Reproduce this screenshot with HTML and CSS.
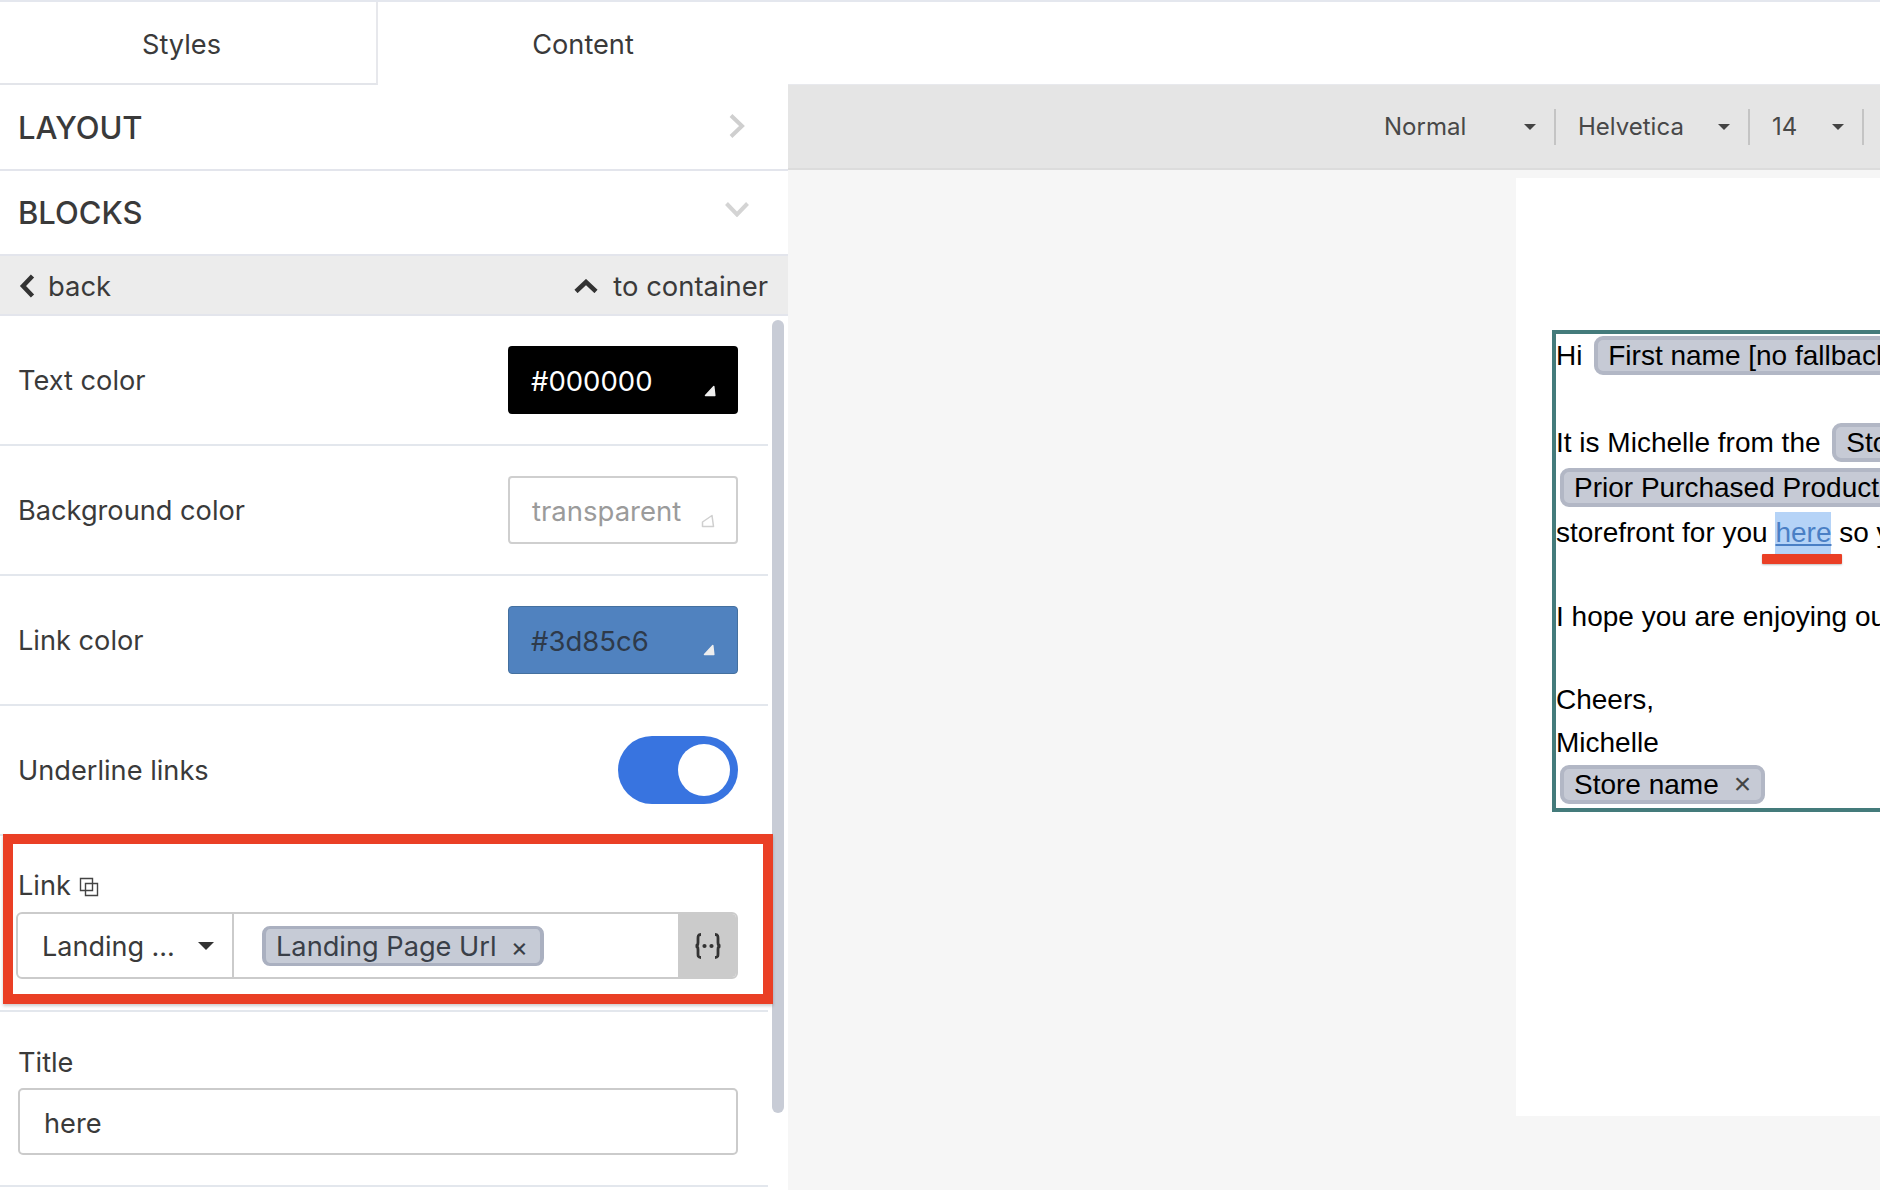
FILE: index.html
```html
<!DOCTYPE html>
<html lang="en">
<head>
<meta charset="utf-8">
<title>Email editor</title>
<link rel="stylesheet" href="styles.css">
</head>
<body>
<div class="app">
  <div class="tabs">
    <div class="tab tab-styles">Styles</div>
    <div class="tab tab-content">Content</div>
  </div>
  <div class="workspace">
    <aside class="sidebar">
      <div class="section section-first">
        <span>LAYOUT</span>
        <svg class="chev-right" width="16" height="24" viewBox="0 0 16 24"><path d="M2 1.500 13 12 2 22.500" fill="none" stroke="#cfcfcf" stroke-width="4"/></svg>
      </div>
      <div class="section">
        <span>BLOCKS</span>
        <svg class="chev-down" width="24" height="15" viewBox="0 0 24 15"><path d="M1.500 1.500 12 12.500 22.500 1.500" fill="none" stroke="#d4d4d4" stroke-width="4"/></svg>
      </div>
      <div class="navbar">
        <div class="nav-item">
          <svg width="16" height="24" viewBox="0 0 16 24"><path d="M13.500 2 4 12l9.500 10" fill="none" stroke="#333" stroke-width="4.500"/></svg>
          <span>back</span>
        </div>
        <div class="nav-item nav-up">
          <svg width="24" height="14" viewBox="0 0 24 14"><path d="M2 12.500 12 3l10 9.500" fill="none" stroke="#333" stroke-width="4.500"/></svg>
          <span>to container</span>
        </div>
      </div>

      <div class="row">
        <span>Text color</span>
        <div class="swatch swatch-black"><span class="swatch-text">#000000</span>
          <svg class="corner" width="12" height="12" viewBox="0 0 12 12"><path d="M1.500 10.500 9.800 1.500 10.800 10.500Z" fill="#eee" stroke="#eee" stroke-width="1.500" stroke-linejoin="round"/></svg>
        </div>
      </div>
      <div class="row">
        <span>Background color</span>
        <div class="swatch swatch-clear"><span class="swatch-text">transparent</span>
          <svg class="corner corner-clear" width="14" height="14" viewBox="0 0 14 14"><path d="M1.500 12.500 1.500 8 11 1.500 12.500 12.500Z" fill="#fff" stroke="#cfcfcf" stroke-width="1.500" stroke-linejoin="round"/></svg>
        </div>
      </div>
      <div class="row">
        <span>Link color</span>
        <div class="swatch swatch-blue"><span class="swatch-text">#3d85c6</span>
          <svg class="corner" width="12" height="12" viewBox="0 0 12 12"><path d="M1.500 10.500 9.800 1.500 10.800 10.500Z" fill="#eee" stroke="#eee" stroke-width="1.500" stroke-linejoin="round"/></svg>
        </div>
      </div>
      <div class="row">
        <span>Underline links</span>
        <div class="toggle"><div class="knob"></div></div>
      </div>

      <div class="field-row field-link">
        <div class="field-label">Link
          <svg class="copy-icon" width="20" height="20" viewBox="0 0 20 20"><path d="M1.500 1.500h12v12h-12z M6.500 6.500h12v12h-12z" fill="none" stroke="#444" stroke-width="1.400"/></svg>
        </div>
        <div class="link-field">
          <div class="link-select">
            <span>Landing ...</span>
            <svg width="16" height="8" viewBox="0 0 16 8"><path d="M0 0h16L8 8z" fill="#333"/></svg>
          </div>
          <div class="link-value">
            <span class="tag">Landing Page Url<span class="tag-x">×</span></span>
          </div>
          <div class="link-btn">
            <svg width="28" height="26" viewBox="0 0 28 26"><path d="M7 1.500C4 1.500 4 3 4 5.500v4C4 11.500 3.500 13 1.500 13 3.500 13 4 14.500 4 16.500v4C4 23 4 24.500 7 24.500M21 1.500C24 1.500 24 3 24 5.500v4c0 2 .5 3.500 2.500 3.500-2 0-2.500 1.500-2.500 3.500v4c0 2.500 0 4-3 4" fill="none" stroke="#333" stroke-width="2.800"/><circle cx="10.500" cy="13" r="2.100" fill="#333"/><circle cx="17.500" cy="13" r="2.100" fill="#333"/></svg>
          </div>
        </div>
      </div>

      <div class="field-row">
        <div class="field-label">Title</div>
        <div class="text-input">here</div>
      </div>

      <div class="scroll-thumb"></div>
      <div class="callout"></div>
    </aside>

    <main class="main">
      <div class="toolbar">
        <div class="tool tool-normal"><span>Normal</span><i class="caret"></i></div>
        <div class="tool tool-font"><span>Helvetica</span><i class="caret"></i></div>
        <div class="tool tool-size"><span>14</span><i class="caret"></i></div>
      </div>
      <div class="canvas">
        <div class="page">
          <div class="email">
            <div class="line">Hi <span class="chip">First name [no fallback]<span class="chip-x">×</span></span></div>
            <div class="line gap-para">It is Michelle from the <span class="chip">Store name<span class="chip-x">×</span></span> team. Based on your order of</div>
            <div class="line gap-line"><span class="chip">Prior Purchased Product<span class="chip-x">×</span></span> we made a personal</div>
            <div class="line gap-line">storefront for you <a class="sel-link" href="#">here</a> so you can reorder easily.
              <span class="mark"></span>
            </div>
            <div class="line gap-para2">I hope you are enjoying our products and the new store.</div>
            <div class="line gap-para3">Cheers,</div>
            <div class="line gap-tight">Michelle</div>
            <div class="line"><span class="chip">Store name<span class="chip-x">×</span></span></div>
          </div>
        </div>
      </div>
    </main>
  </div>
</div>
</body>
</html>
```
FILE: styles.css
```css
* { box-sizing: border-box; }
html, body { margin: 0; padding: 0; }
body {
  width: 1880px;
  height: 1190px;
  overflow: hidden;
  background: #fff;
  font-family: Inter, "Liberation Sans", sans-serif;
  color: #3a3a3a;
}
.app { width: 1880px; height: 1190px; display: flex; flex-direction: column; border-top: 2px solid #e4e7ee; }

.tabs { display: flex; height: 83px; flex: none; background: #fff; }
.tab { display: flex; align-items: center; justify-content: center; padding-top: 2px; font-size: 27.200px; }
.tab-styles { width: 378px; padding-top: 3px; padding-right: 13px; border-right: 2px solid #e7e8ec; border-bottom: 2px solid #e3e5ea; }
.tab-content { width: 410px; }

.workspace { display: flex; flex: 1; min-height: 0; }

.sidebar { position: relative; width: 788px; flex: none; overflow: hidden; background: #fff; }
.section {
  height: 85px;
  display: flex;
  align-items: center;
  justify-content: space-between;
  padding: 0 39px 0 18px;
  font-size: 31px;
  font-weight: 500;
  border-bottom: 2px solid #e3e5ec;
}
.section-first { height: 86px; }
.chev-right { margin-right: 4px; margin-top: -3px; }
.chev-down { margin-top: -6px; }
.navbar {
  height: 60px;
  display: flex;
  align-items: center;
  justify-content: space-between;
  padding: 1px 20px 0 19px;
  background: #ececec;
  border-bottom: 2px solid #e3e5ec;
  font-size: 27.400px;
}
.nav-item { display: flex; align-items: center; gap: 13px; }
.nav-up { gap: 15px; }

.row {
  width: 768px;
  height: 130px;
  display: flex;
  align-items: center;
  justify-content: space-between;
  padding: 0 30px 0 18px;
  font-size: 27.200px;
  border-bottom: 2px solid #e3e7ed;
}
.swatch {
  position: relative;
  width: 230px;
  height: 68px;
  display: flex;
  align-items: center;
  padding-left: 23px;
  border-radius: 4px;
  font-size: 27.500px;
}
.swatch-text { padding-top: 2px; }
.swatch-black { background: #000; color: #fff; }
.swatch-clear { background: #fff; color: #9b9b9b; border: 2px solid #cfcfcf; padding-left: 22px; }
.swatch-blue { background: #5082bf; color: #2e3a4a; border: 1px solid #44709f; padding-left: 22px; }
.corner { position: absolute; right: 22px; bottom: 17px; }
.corner-clear { right: 21px; bottom: 14px; }

.toggle { width: 120px; height: 68px; padding: 8px; display: flex; justify-content: flex-end; border-radius: 34px; background: #3874e0; }
.knob { width: 52px; height: 52px; border-radius: 50%; background: #fff; }

.field-row { width: 768px; height: 175px; padding: 30px 30px 0 18px; border-bottom: 2px solid #e3e7ed; font-size: 27.200px; }
.field-label { display: flex; align-items: center; gap: 8px; height: 40px; margin-bottom: 6px; }
.field-link { height: 176px; padding-top: 19px; }
.field-link .field-label { height: 47px; align-items: flex-end; margin-bottom: 10px; }
.copy-icon { margin-bottom: 5px; }
.link-field {
  display: flex;
  height: 67px;
  margin-left: -2px;
  border: 2px solid #cbcbcb;
  border-radius: 6px;
  overflow: hidden;
}
.link-select {
  width: 216px;
  flex: none;
  display: flex;
  align-items: center;
  justify-content: space-between;
  padding: 0 18px 0 24px;
  border-right: 2px solid #cbcbcb;
  font-size: 27px;
}
.link-select span { padding-top: 2px; }
.link-value { flex: 1; display: flex; align-items: center; padding-left: 28px; }
.tag {
  height: 40px;
  width: 282px;
  display: flex;
  align-items: center;
  padding: 2px 12px 0 10px;
  justify-content: space-between;
  background: #c6cbd6;
  border-style: solid;
  border-width: 3px 4px;
  border-color: #aab0c0;
  border-radius: 8px;
  color: #3a3f48;
}
.tag-x { font-size: 26px; }
.link-btn { width: 58px; flex: none; padding-left: 2px; display: flex; align-items: center; justify-content: center; background: #cbcbcb; }

.text-input {
  height: 67px;
  display: flex;
  align-items: center;
  padding: 3px 0 0 24px;
  border: 2px solid #cbcbcb;
  border-radius: 5px;
}

.scroll-thumb {
  position: absolute;
  left: 772px;
  top: 235px;
  width: 12px;
  height: 793px;
  border-radius: 6px;
  background: #c8ccd6;
}
.callout {
  position: absolute;
  left: 3px;
  top: 749px;
  width: 770px;
  height: 170px;
  border: 10px solid #ea3f25;
  box-shadow: 0 2px 3px rgba(0,0,0,.2);
}

.main { flex: 1; min-width: 0; margin-top: -1px; display: flex; flex-direction: column; background: #f6f6f6; }
.toolbar {
  height: 86px;
  flex: none;
  display: flex;
  justify-content: flex-end;
  align-items: center;
  background: #e5e5e5;
  border-top: 1px solid #e8e9ed;
  border-bottom: 2px solid #dcdcdc;
  padding-right: 16px;
  font-size: 24px;
  color: #484848;
}
.tool {
  height: 36px;
  display: flex;
  align-items: center;
  justify-content: space-between;
  border-right: 2px solid #c4c4c4;
}
.tool-normal { width: 172px; padding-right: 18px; }
.tool-font { width: 194px; padding: 0 18px 0 22px; }
.tool-size { width: 114px; padding: 0 18px 0 22px; }
.caret { width: 0; height: 0; border-left: 6px solid transparent; border-right: 6px solid transparent; border-top: 6px solid #444; }

.canvas { flex: 1; min-height: 0; padding: 8px 0 0 728px; overflow: hidden; }
.page { width: 364px; height: 938px; background: #fff; padding-top: 152px; padding-left: 36px; }
.email {
  width: 600px;
  height: 482px;
  padding-top: 1px;
  border: 4px solid #447b7b;
  font-family: "Liberation Sans", Arial, sans-serif;
  font-size: 28px;
  color: #000;
  white-space: nowrap;
}
.line { position: relative; height: 42px; line-height: 42px; }
.gap-para { margin-top: 45px; }
.gap-line { margin-top: 3px; }
.gap-para2 { margin-top: 42px; }
.gap-para3 { margin-top: 41px; }
.gap-tight { margin-top: 1px; }
.chip {
  display: inline-block;
  height: 39px;
  line-height: 31px;
  margin: 0 4px;
  padding: 0 10px;
  background: #c6cad5;
  border: 4px solid #b2b7c5;
  border-radius: 9px;
}
.chip-x { margin-left: 15px; color: #444; font-size: 30px; line-height: 30px; }
.sel-link { display: inline-block; height: 42px; background: #b5d3f7; color: #4a7fc5; text-decoration: underline; }
.mark {
  position: absolute;
  left: 206px;
  top: 42px;
  width: 80px;
  height: 10px;
  background: #ea3f25;
  border-radius: 1px;
  box-shadow: 0 1px 2px rgba(0,0,0,.25);
}
```
